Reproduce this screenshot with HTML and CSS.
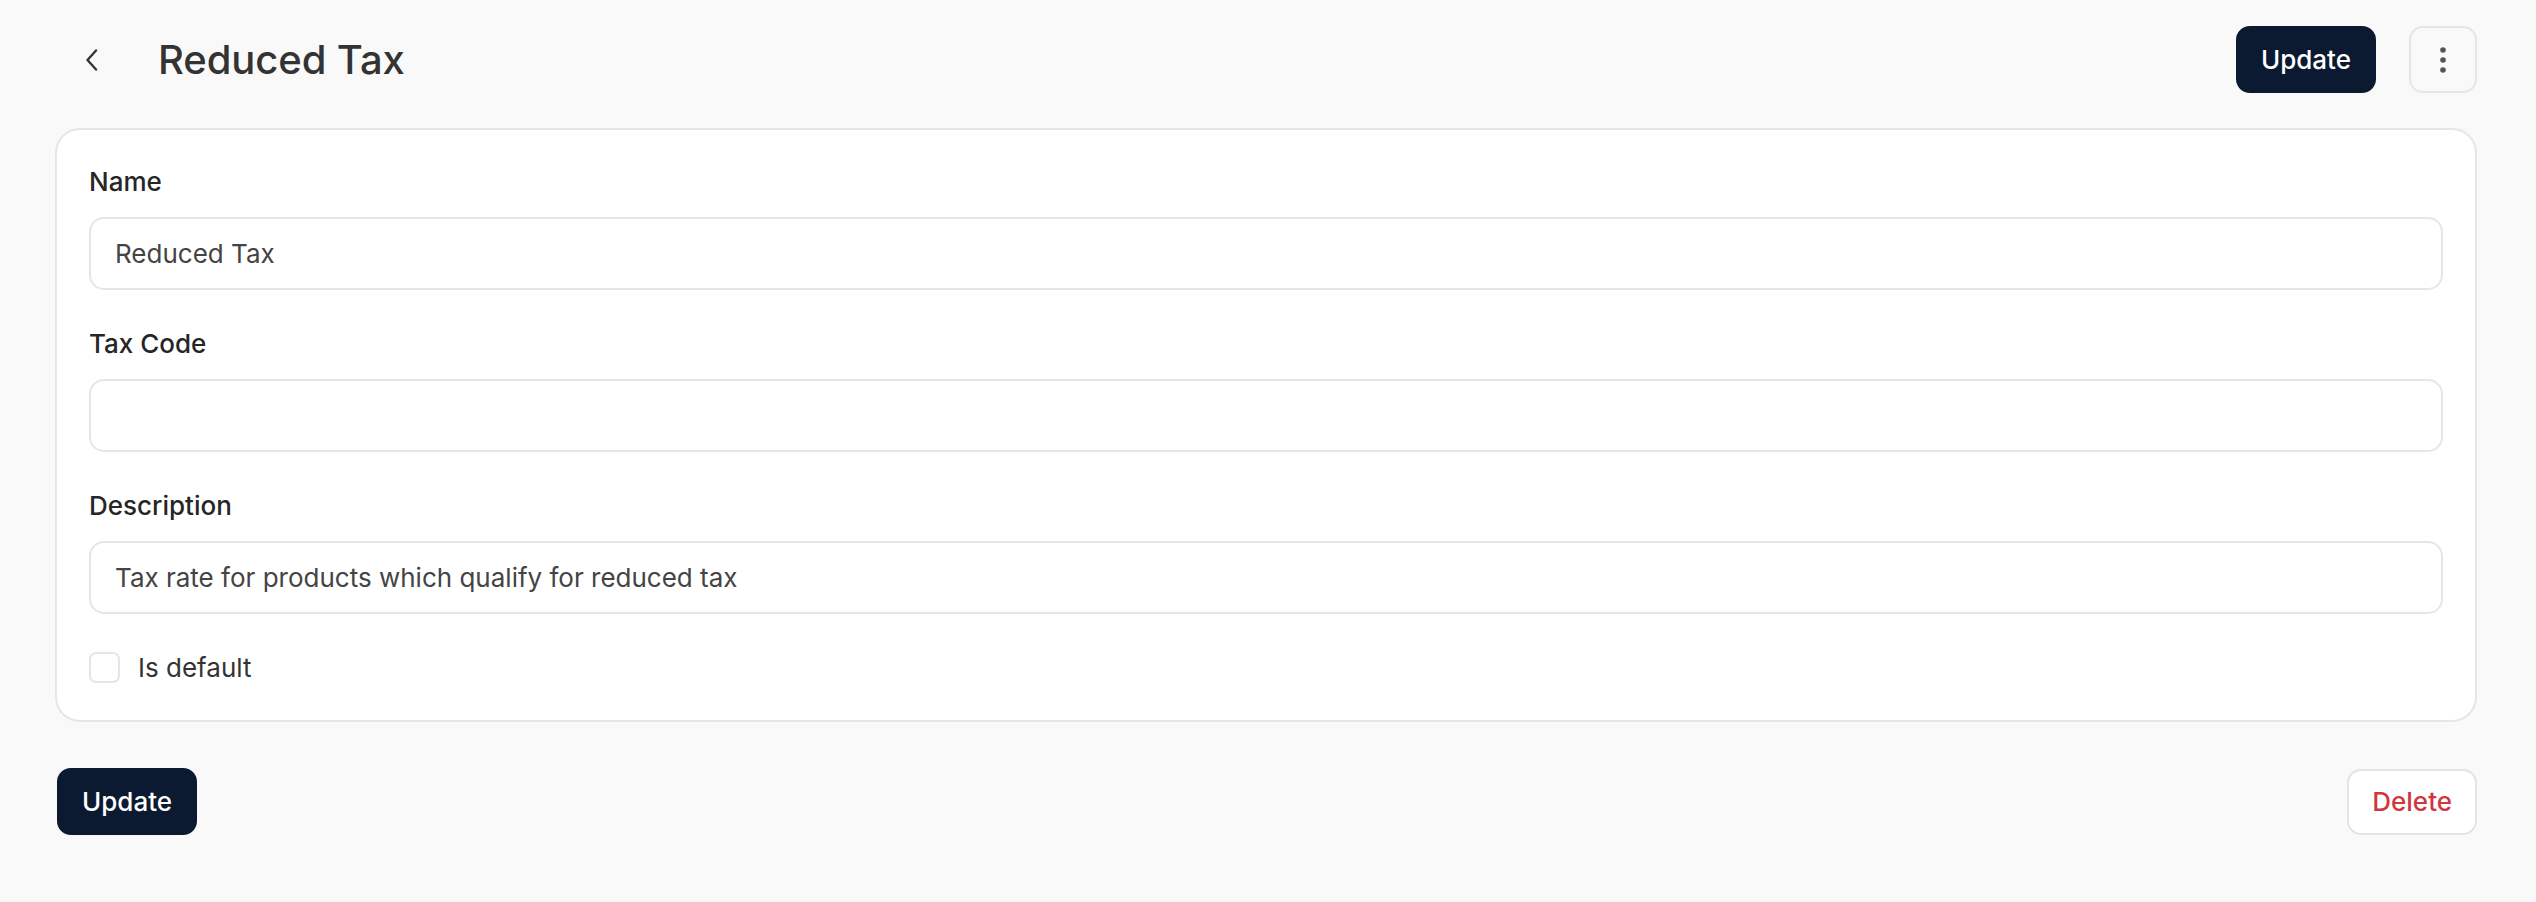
FILE: index.html
```html
<!DOCTYPE html>
<html lang="en">
<head>
<meta charset="utf-8">
<title>Reduced Tax</title>
<link rel="stylesheet" href="styles.css">
</head>
<body>
<div class="page">
  <header class="topbar">
    <div class="topbar-left">
      <button class="back-btn" type="button" aria-label="Back">
        <svg width="14" height="22" viewBox="0 0 14 22" fill="none">
          <path d="M11 1.5 L2.5 11 L11 20.5" stroke="#333" stroke-width="2.4" stroke-linecap="round" stroke-linejoin="round"/>
        </svg>
      </button>
      <h1 class="title">Reduced Tax</h1>
    </div>
    <div class="topbar-actions">
      <button class="btn btn-primary" type="button">Update</button>
      <button class="btn btn-icon" type="button" aria-label="More">
        <svg width="8" height="28" viewBox="0 0 8 28">
          <circle cx="4" cy="4" r="2.8" fill="#555"/>
          <circle cx="4" cy="14" r="2.8" fill="#555"/>
          <circle cx="4" cy="24" r="2.8" fill="#555"/>
        </svg>
      </button>
    </div>
  </header>

  <form class="card">
    <div class="field">
      <label class="field-label" for="name">Name</label>
      <input class="field-input" id="name" type="text" value="Reduced Tax">
    </div>
    <div class="field">
      <label class="field-label" for="code">Tax Code</label>
      <input class="field-input" id="code" type="text" value="">
    </div>
    <div class="field">
      <label class="field-label" for="desc">Description</label>
      <input class="field-input" id="desc" type="text" value="Tax rate for products which qualify for reduced tax">
    </div>
    <label class="check-row">
      <input class="check" type="checkbox">
      <span class="check-label">Is default</span>
    </label>
  </form>

  <div class="footer">
    <button class="btn btn-primary" type="button">Update</button>
    <button class="btn btn-danger" type="button">Delete</button>
  </div>
</div>
</body>
</html>
```

FILE: styles.css
```css
* {
  box-sizing: border-box;
}

html, body {
  margin: 0;
  padding: 0;
  background: #f9f9f9;
}

body {
  font-family: Inter, "Noto Sans", "Liberation Sans", sans-serif;
  color: #2b2b2b;
}

.page {
  padding: 26px 59px 40px 55px;
}

.topbar {
  display: flex;
  align-items: center;
  justify-content: space-between;
  height: 67px;
  margin-bottom: 35px;
}

.topbar-left {
  display: flex;
  align-items: center;
  gap: 41px;
  padding-left: 12px;
}

.back-btn {
  width: 50px;
  height: 50px;
  display: flex;
  align-items: center;
  justify-content: center;
  border: none;
  background: transparent;
  padding: 0;
  cursor: pointer;
}

.title {
  margin: 0;
  font-size: 40px;
  line-height: 48px;
  font-weight: 500;
  color: #333;
  letter-spacing: -0.1px;
}

.topbar-actions {
  display: flex;
  align-items: center;
  gap: 33px;
}

.btn {
  height: 67px;
  padding: 0 23px;
  border-radius: 14px;
  font-family: inherit;
  font-size: 26px;
  font-weight: 500;
  line-height: 1;
  cursor: pointer;
  border: 2px solid transparent;
  display: inline-flex;
  align-items: center;
  justify-content: center;
}

.btn-primary {
  background: #0c1a31;
  color: #fff;
  border-color: #0c1a31;
}

.btn-icon {
  width: 68px;
  padding: 0;
  background: #f9f9f9;
  border-color: #e6e6e6;
}

.btn-danger {
  background: #fff;
  border-color: #e4e4e4;
  color: #d1363f;
  padding: 0 23px;
  height: 66px;
}

.card {
  background: #fff;
  border: 2px solid #e6e6e6;
  border-radius: 25px;
  padding: 32px 32px 33px;
  display: flex;
  flex-direction: column;
  gap: 34px;
}

.field {
  display: flex;
  flex-direction: column;
  gap: 16px;
}

.field-label {
  font-size: 26px;
  line-height: 39px;
  font-weight: 500;
  color: #262626;
}

.field-input {
  height: 73px;
  width: 100%;
  border: 2px solid #e6e6e6;
  border-radius: 15px;
  padding: 0 24px;
  font-family: inherit;
  font-size: 26px;
  color: #444;
  background: #fff;
  outline: none;
}

.check-row {
  display: flex;
  align-items: center;
  gap: 18px;
  height: 39px;
}

.check {
  appearance: none;
  -webkit-appearance: none;
  margin: 0;
  width: 31px;
  height: 31px;
  border: 2px solid #e6e6e6;
  border-radius: 7px;
  background: #fff;
}

.check-label {
  font-size: 26px;
  line-height: 39px;
  color: #333;
}

.footer {
  display: flex;
  justify-content: space-between;
  align-items: center;
  margin-top: 46px;
  padding-left: 2px;
}
```
